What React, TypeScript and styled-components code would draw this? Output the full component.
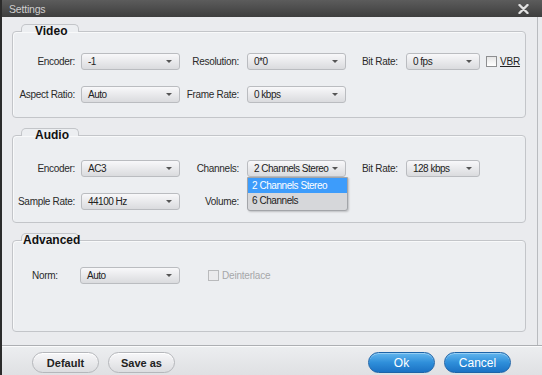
import styled, { createGlobalStyle } from 'styled-components';

const GlobalStyle = createGlobalStyle`
  html, body {
    margin: 0;
    padding: 0;
    background: #e9eaed;
  }
  * { box-sizing: border-box; }
`;

const StyledWindow = styled.div`
  width: 542px;
  height: 375px;
  display: flex;
  flex-direction: column;
  background: #eaebee;
  border-left: 2px solid #2b2b2b;
  font-family: "Liberation Sans", Arial, sans-serif;
  overflow: hidden;
`;

const TitleBar = styled.div`
  height: 17px;
  flex: none;
  display: flex;
  align-items: center;
  justify-content: space-between;
  padding: 0 13px 0 7px;
  background: linear-gradient(#5c5c5c, #3e3e3e);
`;

const Title = styled.span`
  font-size: 10.5px;
  color: #cfcfcf;
  letter-spacing: -0.2px;
`;

const Content = styled.div`
  flex: 1;
  padding: 7px 11px 0 10px;
  border-right: 1px solid #b9bbbf;
  margin-right: 4px;
`;

const Group = styled.section<{ $gap: number }>`
  margin-top: ${p => p.$gap}px;
`;

const Tab = styled.div<{ $indent: number }>`
  position: relative;
  z-index: 1;
  width: 58px;
  height: 8px;
  margin: 0 0 -1px 9px;
  padding-left: ${p => p.$indent}px;
  border: 1px solid #c3c5c9;
  border-bottom: none;
  border-radius: 5px 5px 0 0;
  background: #eceef1;
`;

const TabLabel = styled.span`
  display: block;
  white-space: nowrap;
  font-size: 12px;
  font-weight: bold;
  line-height: 12px;
  color: #111;
`;

const Box = styled.div<{ $top: number; $bottom: number; $cols: string }>`
  display: grid;
  grid-template-columns: ${p => p.$cols};
  row-gap: 16px;
  align-items: center;
  padding: ${p => p.$top}px 0 ${p => p.$bottom}px 0;
  border: 1px solid #c3c5c9;
  border-radius: 4px;
  background: #eceef1;
  box-shadow: inset 1px 1px 0 #f8f9fa;
`;

const Label = styled.span<{ $align?: 'left' | 'right'; $pad?: number }>`
  font-size: 10px;
  letter-spacing: -0.3px;
  color: #2a2a2a;
  white-space: nowrap;
  text-align: ${p => p.$align || 'left'};
  padding-left: ${p => (p.$align === 'right' ? 0 : p.$pad || 0)}px;
  padding-right: ${p => (p.$align === 'right' ? p.$pad || 0 : 0)}px;
`;

const SelectBox = styled.div`
  position: relative;
  height: 17px;
  display: flex;
  align-items: center;
  justify-content: space-between;
  gap: 4px;
  padding: 0 7px 0 6px;
  border: 1px solid #babcc0;
  border-radius: 3px;
  background: linear-gradient(#f8f8fa, #dadbde);
  font-size: 10px;
  letter-spacing: -0.5px;
  color: #222;
  white-space: nowrap;
`;

const Arrow = styled.span`
  flex: none;
  width: 0;
  height: 0;
  border-left: 3px solid transparent;
  border-right: 3px solid transparent;
  border-top: 3px solid #555;
`;

const DropList = styled.div`
  position: absolute;
  top: 16px;
  left: -1px;
  width: 101px;
  border: 1px solid #a3a5a9;
  border-radius: 0 0 3px 3px;
  background: #d6d7da;
  box-shadow: 1px 1px 2px rgba(0, 0, 0, 0.2);
  overflow: hidden;
`;

const DropItem = styled.div<{ $active?: boolean }>`
  height: ${p => (p.$active ? 15 : 17)}px;
  line-height: 15px;
  padding-left: 4px;
  font-size: 10px;
  letter-spacing: -0.45px;
  color: ${p => (p.$active ? '#fff' : '#222')};
  background: ${p => (p.$active ? '#3d9cfb' : 'transparent')};
`;

const CheckRow = styled.label<{ $disabled?: boolean; $pad: number }>`
  display: flex;
  align-items: center;
  gap: 3px;
  padding-left: ${p => p.$pad}px;
  font-size: 10px;
  letter-spacing: -0.2px;
  color: ${p => (p.$disabled ? '#a6a7a9' : '#222')};
`;

const CheckBox = styled.span<{ $disabled?: boolean }>`
  width: 11px;
  height: 11px;
  border: 1px solid ${p => (p.$disabled ? '#b9babc' : '#8d8e90')};
  background: ${p => (p.$disabled ? '#ebebed' : 'linear-gradient(#e6e6e6, #fff)')};
`;

const Underlined = styled.span`
  text-decoration: underline;
`;

const Footer = styled.div`
  height: 30px;
  flex: none;
  display: flex;
  align-items: flex-start;
  padding: 6px 31px 0 30px;
  border-top: 1px solid #adafb3;
  background: linear-gradient(#eceef0, #dfe0e3);
  box-shadow: inset 0 1px 0 #fbfbfc;
`;

const ButtonGroup = styled.div`
  display: flex;
  gap: 9px;
`;

const Spacer = styled.div`
  flex: 1;
`;

const Button = styled.button<{ $primary?: boolean }>`
  width: 67px;
  height: 21px;
  padding: 0;
  border-radius: 11px;
  font-family: "Liberation Sans", Arial, sans-serif;
  font-size: ${p => (p.$primary ? 12 : 11)}px;
  font-weight: ${p => (p.$primary ? 'normal' : 'bold')};
  color: ${p => (p.$primary ? '#fff' : '#222')};
  border: 1px solid ${p => (p.$primary ? '#1d64a8' : '#b5b7bb')};
  background: ${p =>
    p.$primary
      ? 'linear-gradient(#62b6ee 0%, #2f8fda 50%, #1b72c4 100%)'
      : 'linear-gradient(#f7f7f9, #dcdde0)'};
  box-shadow: inset 0 1px 0 ${p => (p.$primary ? 'rgba(255,255,255,0.35)' : '#fff')};
`;

function Select({ value, open }: { value: string; open?: string[] }) {
  return (
    <SelectBox>
      <span>{value}</span>
      <Arrow />
      {open && (
        <DropList>
          {open.map((item, i) => (
            <DropItem key={item} $active={i === 0}>{item}</DropItem>
          ))}
        </DropList>
      )}
    </SelectBox>
  );
}

const MAIN_COLS = '68px 99px 67px 99px 60px 74px auto';

export default function App() {
  return (
    <>
      <GlobalStyle />
      <StyledWindow>
        <TitleBar>
          <Title>Settings</Title>
          <svg width="11" height="10" viewBox="0 0 11 10">
            <path d="M1.5 1 L9.5 9 M9.5 1 L1.5 9" stroke="#e2e2e2" strokeWidth="2.4" strokeLinecap="round" />
          </svg>
        </TitleBar>

        <Content>
          <Group $gap={0}>
            <Tab $indent={13}><TabLabel>Video</TabLabel></Tab>
            <Box $top={21} $bottom={14} $cols={MAIN_COLS}>
              <Label $align="right" $pad={6}>Encoder:</Label>
              <Select value="-1" />
              <Label $align="right" $pad={8}>Resolution:</Label>
              <Select value="0*0" />
              <Label $pad={16}>Bit Rate:</Label>
              <Select value="0 fps" />
              <CheckRow $pad={6}><CheckBox /><Underlined>VBR</Underlined></CheckRow>

              <Label $align="right" $pad={6}>Aspect Ratio:</Label>
              <Select value="Auto" />
              <Label $align="right" $pad={8}>Frame Rate:</Label>
              <Select value="0 kbps" />
            </Box>
          </Group>

          <Group $gap={10}>
            <Tab $indent={13}><TabLabel>Audio</TabLabel></Tab>
            <Box $top={24} $bottom={12} $cols={MAIN_COLS}>
              <Label $align="right" $pad={6}>Encoder:</Label>
              <Select value="AC3" />
              <Label $align="right" $pad={8}>Channels:</Label>
              <Select value="2 Channels Stereo" open={['2 Channels Stereo', '6 Channels']} />
              <Label $pad={16}>Bit Rate:</Label>
              <Select value="128 kbps" />
              <span />

              <Label $align="right" $pad={6}>Sample Rate:</Label>
              <Select value="44100 Hz" />
              <Label $align="right" $pad={8}>Volume:</Label>
            </Box>
          </Group>

          <Group $gap={10}>
            <Tab $indent={1}><TabLabel>Advanced</TabLabel></Tab>
            <Box $top={26} $bottom={47} $cols="67px 100px auto">
              <Label $pad={19}>Norm:</Label>
              <Select value="Auto" />
              <CheckRow $disabled $pad={28}><CheckBox $disabled />Deinterlace</CheckRow>
            </Box>
          </Group>
        </Content>

        <Footer>
          <ButtonGroup>
            <Button>Default</Button>
            <Button>Save as</Button>
          </ButtonGroup>
          <Spacer />
          <ButtonGroup>
            <Button $primary>Ok</Button>
            <Button $primary>Cancel</Button>
          </ButtonGroup>
        </Footer>
      </StyledWindow>
    </>
  );
}
